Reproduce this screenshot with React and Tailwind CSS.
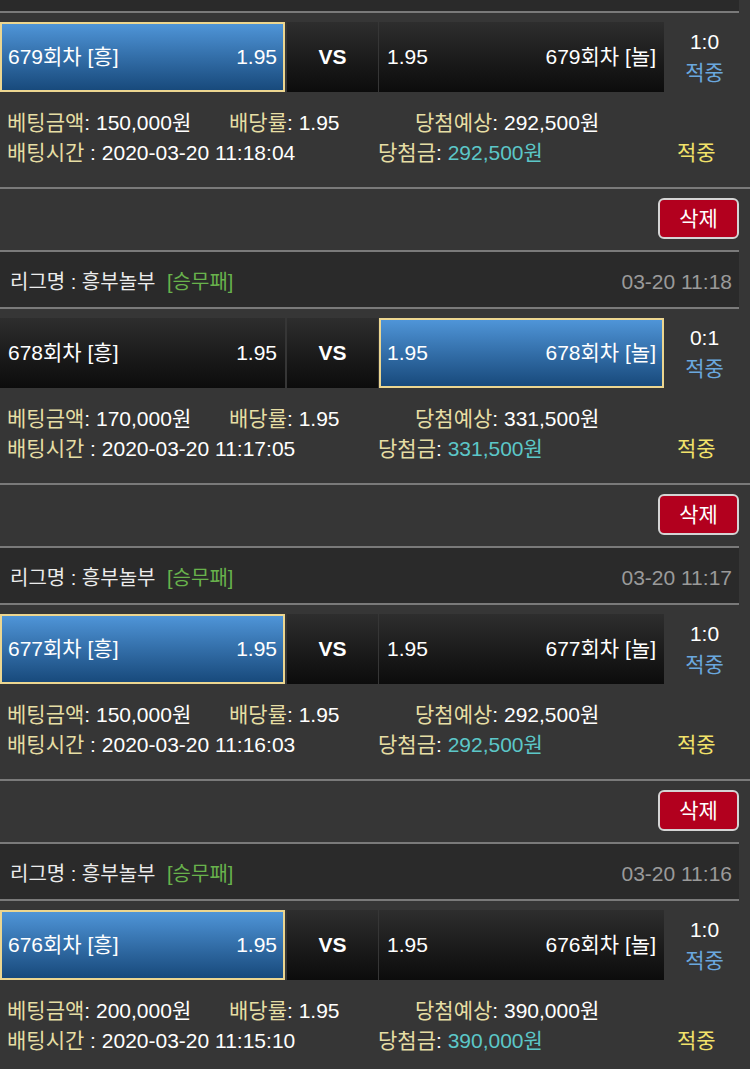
import React from 'react';

const bets = [
  { round: 679, pick: 'home', score: '1:0', date: '03-20 11:19', amount: '150,000', time: '2020-03-20 11:18:04', win: '292,500' },
  { round: 678, pick: 'away', score: '0:1', date: '03-20 11:18', amount: '170,000', time: '2020-03-20 11:17:05', win: '331,500' },
  { round: 677, pick: 'home', score: '1:0', date: '03-20 11:17', amount: '150,000', time: '2020-03-20 11:16:03', win: '292,500' },
  { round: 676, pick: 'home', score: '1:0', date: '03-20 11:16', amount: '200,000', time: '2020-03-20 11:15:10', win: '390,000' },
];

const font = { fontFamily: '"Liberation Sans", "Noto Sans CJK KR", sans-serif' };

function TeamBox({ selected, children }) {
  return selected ? (
    <div className="w-[285px] h-full flex items-center justify-between px-[6px] border-2 border-[#ecd690] bg-gradient-to-b from-[#4f95d8] to-[#184a7c] text-white">
      {children}
    </div>
  ) : (
    <div className="w-[285px] h-full flex items-center justify-between px-[8px] bg-gradient-to-b from-[#2e2e2e] to-[#0c0c0c] text-white">
      {children}
    </div>
  );
}

function LeagueHeader({ bet, cut }) {
  // the first card is scrolled off the top: only the bottom strip of its header shows
  if (cut) {
    return <div className="w-[739px] h-[13px] border-b-2 border-[#7a7a7a] bg-[#2a2a2a]" />;
  }
  return (
    <div className="w-[739px] h-[59px] border-y-2 border-[#7a7a7a] bg-[#2a2a2a] flex items-center justify-between pl-[10px] pr-[7px] pt-1">
      <div className="text-[20px] text-[#ececec]">
        리그명 : 흥부놀부 <span className="ml-[6px] text-[#68b24c]">[승무패]</span>
      </div>
      <div className="text-[21px] text-[#9a9a9a]">{bet.date}</div>
    </div>
  );
}

function BetCard({ bet, cut, last }) {
  return (
    <div>
      <LeagueHeader bet={bet} cut={cut} />

      {/* match row */}
      <div className="mt-[9px] h-[70px] w-[739px] flex text-[21px]">
        <TeamBox selected={bet.pick === 'home'}>
          <span>{bet.round}회차 [흥]</span>
          <span>1.95</span>
        </TeamBox>
        <div className="ml-[2px] w-[91px] h-full flex items-center justify-center bg-gradient-to-b from-[#2e2e2e] to-[#0c0c0c] text-white font-bold text-[21px]">
          VS
        </div>
        <div className="ml-[1px]">
          <TeamBox selected={bet.pick === 'away'}>
            <span>1.95</span>
            <span>{bet.round}회차 [놀]</span>
          </TeamBox>
        </div>
        <div className="w-[75px] h-full flex flex-col items-center justify-center pl-[6px] leading-[31px]">
          <span className="text-white">{bet.score}</span>
          <span className="text-[#6aa7de]">적중</span>
        </div>
      </div>

      {/* bet info */}
      <div className="h-[95px] pt-[16px] pl-[7px] text-[21px] leading-[30px] text-white">
        <div className="flex">
          <div className="w-[222px]"><span className="text-[#e6dea4]">베팅금액</span>: {bet.amount}원</div>
          <div className="w-[186px]"><span className="text-[#e6dea4]">배당률</span>: 1.95</div>
          <div><span className="text-[#e6dea4]">당첨예상</span>: {bet.win}원</div>
        </div>
        <div className="flex">
          <div className="w-[371px]"><span className="text-[#e6dea4]">배팅시간</span> : {bet.time}</div>
          <div className="w-[299px]"><span className="text-[#e6dea4]">당첨금</span>: <span className="text-[#5cc7c8]">{bet.win}원</span></div>
          <div className="text-[#f2e26a]">적중</div>
        </div>
      </div>

      {/* delete row */}
      {!last && (
        <div className="border-t-2 border-[#7a7a7a] h-[63px] pt-[9px] pr-[11px] flex justify-end">
          <button className="w-[81px] h-[41px] rounded-[6px] border-2 border-[#d4d4d4] bg-[#b2001e] text-white text-[21px]">
            삭제
          </button>
        </div>
      )}
    </div>
  );
}

export default function App() {
  return (
    <div className="w-[750px] h-[1069px] overflow-hidden bg-[#363636]" style={font}>
      {bets.map((b, i) => (
        <BetCard key={b.round} bet={b} cut={i === 0} last={i === bets.length - 1} />
      ))}
    </div>
  );
}
